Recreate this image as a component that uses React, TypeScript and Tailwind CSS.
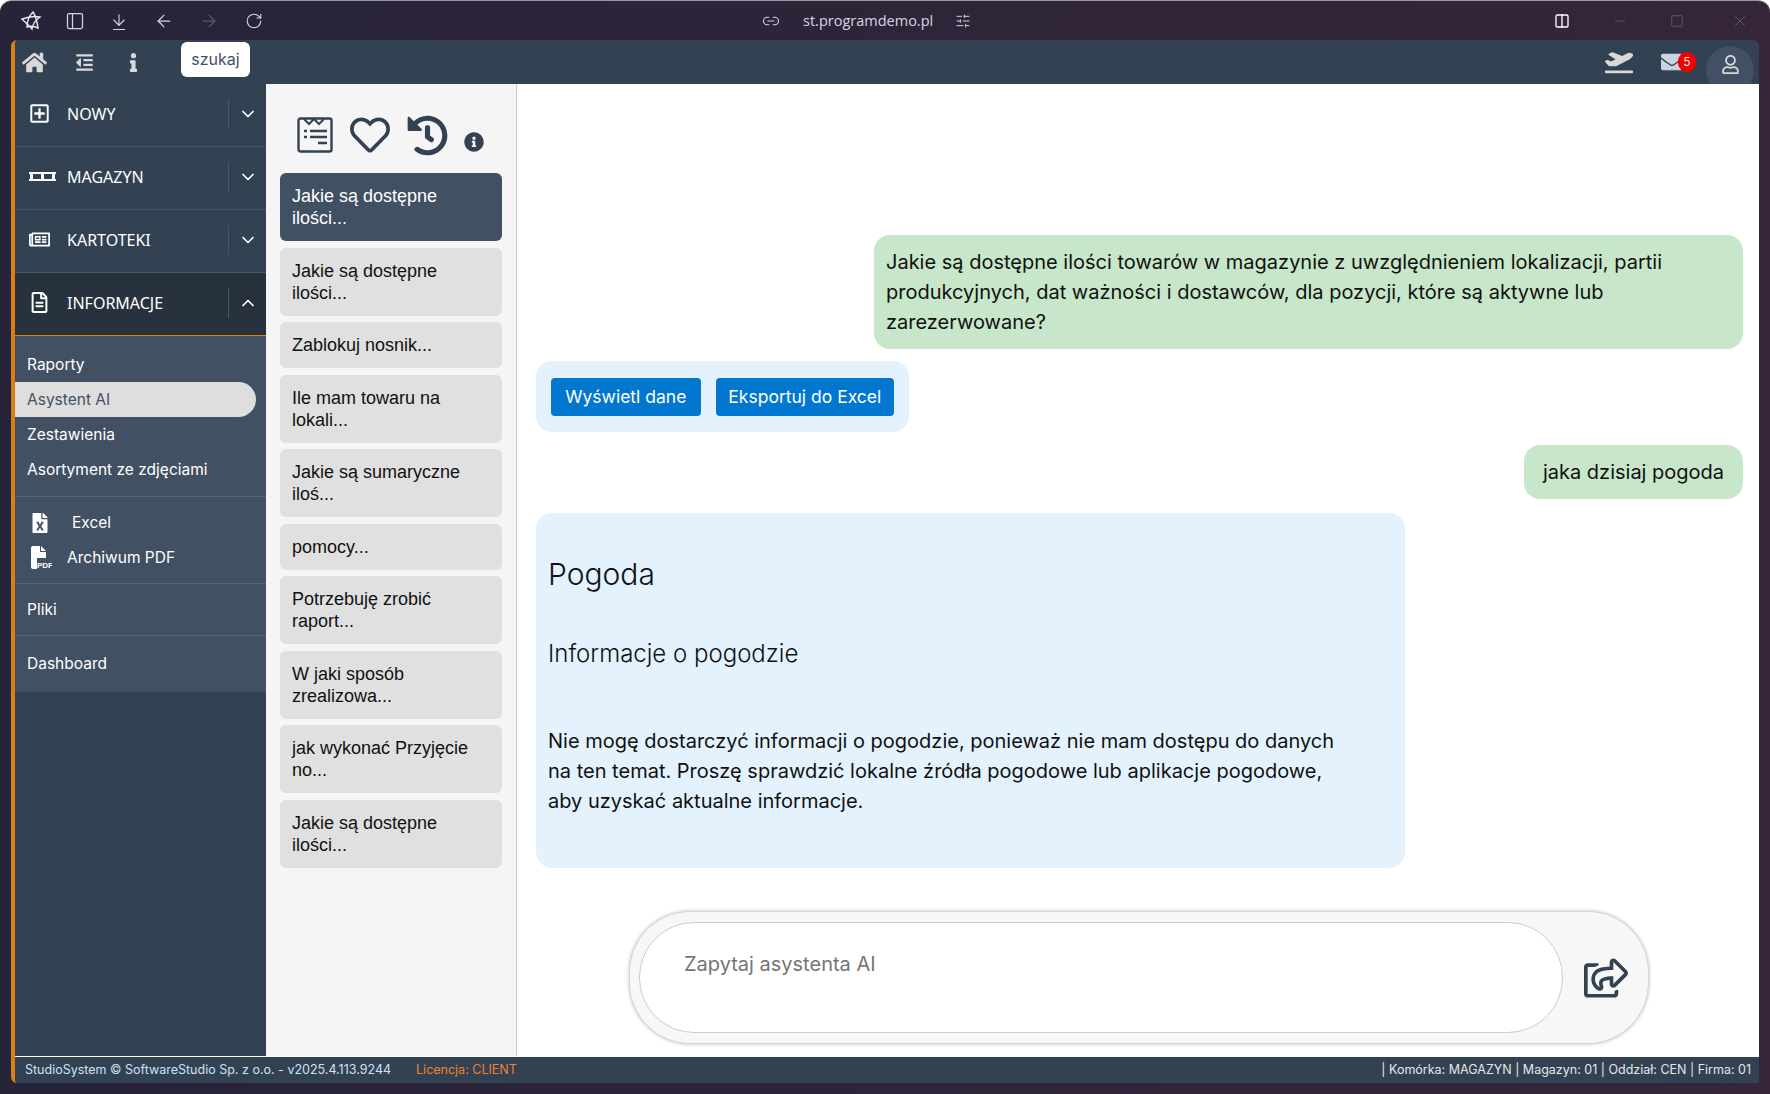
import { ArrowDown, ArrowLeft, ArrowRight, ChevronDown, ChevronUp, Columns2, Link2, Minus, PanelLeft, RotateCw, SlidersHorizontal, Square, X } from "lucide-react";
import { FaEnvelope, FaFileExcel, FaHistory, FaHome, FaInfo, FaInfoCircle, FaOutdent, FaPlaneDeparture, FaRegFileAlt, FaRegHeart, FaRegNewspaper, FaRegPlusSquare, FaRegShareSquare, FaRegUser } from "react-icons/fa";

const history = [
  ["Jakie są dostępne", "ilości..."],
  ["Jakie są dostępne", "ilości..."],
  ["Zablokuj nosnik..."],
  ["Ile mam towaru na", "lokali..."],
  ["Jakie są sumaryczne", "iloś..."],
  ["pomocy..."],
  ["Potrzebuję zrobić", "raport..."],
  ["W jaki sposób", "zrealizowa..."],
  ["jak wykonać Przyjęcie", "no..."],
  ["Jakie są dostępne", "ilości..."],
];

function PalletIcon() {
  return (
    <svg width="27" height="12" viewBox="0 0 27 12" fill="currentColor">
      <rect x="0" y="1" width="27" height="2" />
      <rect x="0" y="8" width="27" height="2" />
      <rect x="1" y="3" width="3" height="5" />
      <rect x="12" y="3" width="3" height="5" />
      <rect x="23" y="3" width="3" height="5" />
    </svg>
  );
}

function PdfIcon() {
  return (
    <svg width="22" height="23" viewBox="0 0 22 23" fill="currentColor">
      <path d="M1 2a2 2 0 0 1 2-2h7v6h6v6H7v11H3a2 2 0 0 1-2-2z" />
      <path d="M11 0l5 5h-5z" />
      <text x="7" y="21.5" fontSize="8" fontWeight="700" fontFamily="Liberation Sans, sans-serif">PDF</text>
    </svg>
  );
}

function ListIcon() {
  return (
    <svg width="36" height="36" viewBox="0 0 36 36" fill="none" stroke="#334252" strokeWidth="2.4">
      <rect x="1.5" y="1.5" width="33" height="33" rx="2" />
      <path d="M7 2l5 5 5-5 5 5 5-5" strokeWidth="2" />
      <path d="M7 14h3M13 14h17M7 20h3M13 20h17M21 26h9" strokeWidth="2.6" />
    </svg>
  );
}

function AppLogo() {
  return (
    <svg width="22" height="20" viewBox="0 0 22 20" fill="none" stroke="#e8e8ee" strokeWidth="1.4">
      <path d="M2 8c5-2 13-3 18-2-3 2-7 6-8 12-2-3-6-6-10-10z" />
      <path d="M7 16c0-5 2-11 6-15 2 3 4 9 5 16-4-2-8-2-11-1z" />
    </svg>
  );
}

function NavRow({ icon, label, open }: { icon: React.ReactNode; label: string; open?: boolean }) {
  return (
    <div className={`flex h-[63px] items-center border-b border-[#465866] pl-[14px] pb-[3px] ${open ? "bg-[#28323e] border-b-[#d97f16]" : ""}`}>
      <span className="flex w-[38px] items-center text-white">{icon}</span>
      <span className="flex-1 [font-family:'Noto_Sans',sans-serif] text-[16px] text-white">{label}</span>
      <span className="flex h-[30px] w-[38px] items-center justify-center border-l border-[#465866] text-white">
        {open ? <ChevronUp size={20} /> : <ChevronDown size={20} />}
      </span>
    </div>
  );
}

function SubItem({ label, active }: { label: string; active?: boolean }) {
  return (
    <div className={`flex h-[35px] w-[241px] items-center rounded-r-full pl-3 text-[15.5px] ${active ? "bg-[#dedede] text-[#415062]" : "text-white"}`}>
      {label}
    </div>
  );
}

export default function App() {
  return (
    <div className="flex h-[1094px] w-[1770px] flex-col overflow-hidden rounded-t-xl border-t border-[#9a9a9a] bg-gradient-to-r from-[#272338] to-[#35263a] [font-family:Inter,sans-serif]">
      {/* Window title bar */}
      <div className="relative flex h-[39px] shrink-0 items-center text-[#d6d3e2]">
        <div className="flex items-center">
          <span className="ml-[20px] w-[22px]"><AppLogo /></span>
          <PanelLeft size={20} strokeWidth={1.5} className="ml-[23px]" />
          <div className="ml-[25px] flex flex-col items-center">
            <ArrowDown size={18} strokeWidth={1.5} />
            <div className="h-px w-3 bg-[#d6d3e2]" />
          </div>
          <ArrowLeft size={20} strokeWidth={1.5} className="ml-[26px]" />
          <ArrowRight size={20} strokeWidth={1.5} className="ml-[25px] text-[#5d586f]" />
          <RotateCw size={18} strokeWidth={1.5} className="ml-[26px]" />
        </div>
        <div className="ml-[499px] flex items-center">
          <Link2 size={18} strokeWidth={1.5} />
          <span className="ml-[23px] [font-family:'Open_Sans',sans-serif] text-[14.5px]">st.programdemo.pl</span>
          <SlidersHorizontal size={16} strokeWidth={1.5} className="ml-[22px]" />
        </div>
        <div className="ml-auto flex items-center">
          <Columns2 size={16} strokeWidth={2} className="text-white" />
          <Minus size={16} strokeWidth={1} className="ml-[42px] text-[#6e6878]" />
          <Square size={14} strokeWidth={1.2} className="ml-[42px] text-[#6e6878]" />
          <X size={18} strokeWidth={1} className="ml-[47px] mr-[21px] text-[#6e6878]" />
        </div>
      </div>

      {/* App frame */}
      <div className="ml-[11px] mr-[11px] flex w-[1748px] flex-1 flex-col overflow-hidden rounded-t-md rounded-bl-md border-l-[4px] border-[#d97f16] mb-[11px]">
        {/* Top bar */}
        <div className="relative flex h-[44px] shrink-0 items-center overflow-hidden bg-[#334252] text-[#d8d8d8]">
          <FaHome size={25} className="ml-[7px]" />
          <FaOutdent size={19} className="ml-[28px]" />
          <FaInfo size={19} className="ml-[30px]" />
          <div className="ml-[38px] mb-[6px] flex h-[35px] w-[69px] items-center justify-center rounded-md bg-white text-[16px] text-[#415062]">szukaj</div>
          <FaPlaneDeparture size={28} className="ml-auto" />
          <div className="relative ml-[28px]">
            <FaEnvelope size={22} className="text-[#c9d3dd]" />
            <span className="absolute left-[17px] top-[1px] flex h-[20px] w-[18px] items-center justify-center rounded-full bg-[#f50000] text-[12px] text-[#eee]">5</span>
          </div>
          <div className="ml-[23px] mr-[5px] mt-[16px] flex h-[48px] w-[48px] shrink-0 items-start justify-center rounded-full bg-[#415062] pt-[9px]">
            <FaRegUser size={19} />
          </div>
        </div>

        <div className="flex min-h-0 flex-1">
          {/* Sidebar */}
          <div className="flex w-[251px] shrink-0 flex-col bg-[#334252]">
            <div className="border-y-0">
              <NavRow icon={<FaRegPlusSquare size={21} />} label="NOWY" />
              <NavRow icon={<PalletIcon />} label="MAGAZYN" />
              <NavRow icon={<FaRegNewspaper size={21} />} label="KARTOTEKI" />
              <NavRow icon={<FaRegFileAlt size={21} />} label="INFORMACJE" open />
            </div>
            <div className="bg-[#415062] pt-[11px]">
              <SubItem label="Raporty" />
              <SubItem label="Asystent AI" active />
              <SubItem label="Zestawienia" />
              <SubItem label="Asortyment ze zdjęciami" />
              <div className="mt-[9px] border-t border-[#546375] pb-[8px] pt-[8px] text-[15.5px] text-white">
                <div className="flex h-[35px] items-center pl-[15px]">
                  <FaFileExcel size={20} />
                  <span className="ml-[22px]">Excel</span>
                </div>
                <div className="flex h-[35px] items-center pl-[15px]">
                  <PdfIcon />
                  <span className="ml-[15px]">Archiwum PDF</span>
                </div>
              </div>
              <div className="flex h-[52px] items-center border-t border-[#546375] pl-3 text-[15.5px] text-white">Pliki</div>
              <div className="flex h-[57px] items-center border-t border-[#546375] pl-3 text-[15.5px] text-white">Dashboard</div>
            </div>
            <div className="flex-1" />
          </div>

          {/* Saved questions */}
          <div className="flex w-[251px] shrink-0 flex-col border-r border-[#c9c9c9] bg-[#f5f5f5] px-[14px]">
            <div className="flex h-[89px] items-center pl-[17px] pt-[13px]">
              <ListIcon />
              <FaRegHeart size={40} className="ml-[17px] text-[#334252]" />
              <FaHistory size={41} className="ml-[17px] text-[#334252]" />
              <FaInfoCircle size={20} className="ml-[16px] mt-[14px] text-[#334252]" />
            </div>
            <div className="flex flex-col gap-[6.5px] [font-family:'Liberation_Sans',Arial,sans-serif] text-[18px] leading-[22px]">
              {history.map((item, i) => (
                <div key={i} className={`rounded-md px-3 py-3 ${i === 0 ? "bg-[#415062] text-white" : "bg-[#e0e0e0] text-[#111]"}`}>
                  {item.map((line, j) => (
                    <div key={j}>{line}</div>
                  ))}
                </div>
              ))}
            </div>
          </div>

          {/* Chat */}
          <div className="flex min-w-0 flex-1 flex-col bg-white pl-[19px] pr-[16px] pt-[151px] text-[20px] leading-[30px] text-[#111]">
            <div className="self-end rounded-2xl bg-[#c8e6c9] px-3 py-[12px] w-[869px]">
              Jakie są dostępne ilości towarów w magazynie z uwzględnieniem lokalizacji, partii<br />
              produkcyjnych, dat ważności i dostawców, dla pozycji, które są aktywne lub<br />
              zarezerwowane?
            </div>
            <div className="mt-[12px] flex h-[71px] w-[373px] items-center gap-[15px] rounded-2xl bg-[#e3f2fd] px-[15px] text-[17.5px] text-white">
              <button className="h-[38px] w-[151px] rounded bg-[#0277cf]">Wyświetl dane</button>
              <button className="h-[38px] w-[180px] rounded bg-[#0277cf]">Eksportuj do Excel</button>
            </div>
            <div className="mt-[13px] flex h-[54px] w-[219px] items-center justify-center self-end rounded-2xl bg-[#c8e6c9]">jaka dzisiaj pogoda</div>
            <div className="mt-[14px] h-[355px] w-[869px] rounded-2xl bg-[#e3f2fd] px-3 pt-[40px]">
              <h1 className="text-[30px] font-light leading-[42px]">Pogoda</h1>
              <h2 className="mt-[41px] text-[24px] font-light leading-[36px]">Informacje o pogodzie</h2>
              <p className="mt-[54px]">
                Nie mogę dostarczyć informacji o pogodzie, ponieważ nie mam dostępu do danych<br />
                na ten temat. Proszę sprawdzić lokalne źródła pogodowe lub aplikacje pogodowe,<br />
                aby uzyskać aktualne informacje.
              </p>
            </div>
            <div className="ml-[94px] mt-[44px] flex h-[131px] w-[1018px] items-center rounded-[60px] bg-[#f7f7f7] pl-[9px] shadow-[0_0_4px_rgba(0,0,0,0.4)]">
              <div className="h-[111px] w-[924px] rounded-[55px] border border-[#cccccc] bg-white pl-[44px] pt-[26px] text-[#757575]">Zapytaj asystenta AI</div>
              <FaRegShareSquare size={44} className="ml-[21px] text-[#334252]" />
            </div>
          </div>
        </div>

        {/* Status bar */}
        <div className="flex h-[27px] shrink-0 items-center border-t border-white bg-[#334252] pl-[10px] pr-[8px] text-[12.5px]">
          <span className="text-[#cfe0f5]">StudioSystem © SoftwareStudio Sp. z o.o. - v2025.4.113.9244</span>
          <span className="ml-[25px] text-[#f07f2b]">Licencja: CLIENT</span>
          <span className="ml-auto text-[#e6e6e6]">| Komórka: MAGAZYN | Magazyn: 01 | Oddział: CEN | Firma: 01</span>
        </div>
      </div>
    </div>
  );
}
